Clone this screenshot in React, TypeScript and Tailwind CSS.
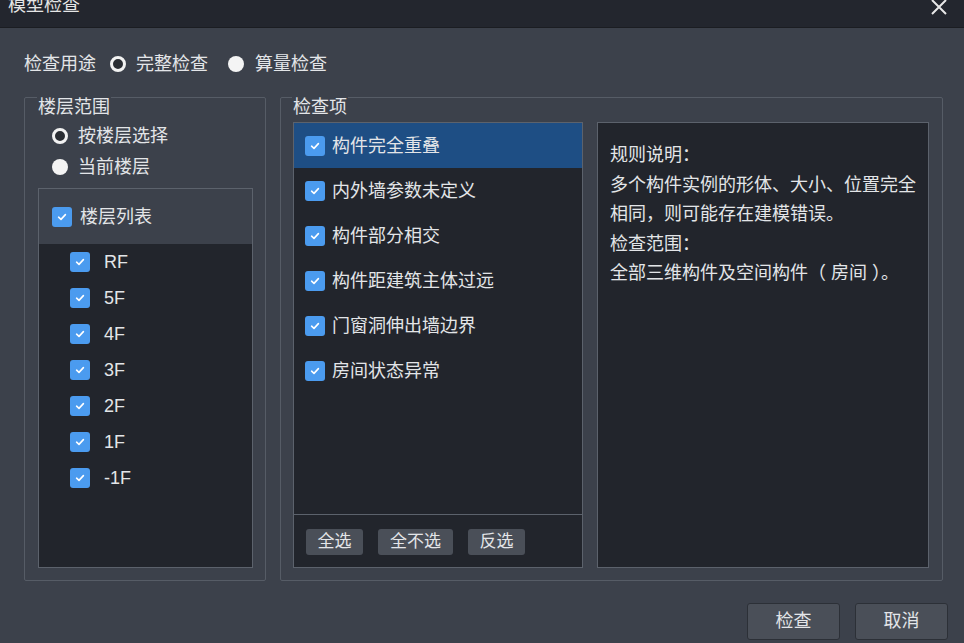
import React from "react";

const FONT = { fontFamily: '"Liberation Sans", "Noto Sans CJK SC", sans-serif' };

function Check({ className = "" }: { className?: string }) {
  return (
    <span className={`flex h-[20px] w-[20px] shrink-0 items-center justify-center rounded-[3px] bg-[#4b9bef] ${className}`}>
      <svg width="12" height="12" viewBox="0 0 12 12" fill="none">
        <path d="M2.6 6.2 L5 8.4 L9.4 3.6" stroke="white" strokeWidth="1.6" strokeLinecap="round" strokeLinejoin="round" />
      </svg>
    </span>
  );
}

function Radio({ checked, className = "" }: { checked: boolean; className?: string }) {
  return checked ? (
    <span className={`block h-[16px] w-[16px] shrink-0 rounded-full border-[3px] border-[#f2f2f2] bg-[#2a2d33] ${className}`} />
  ) : (
    <span className={`block h-[16px] w-[16px] shrink-0 rounded-full bg-[#f4f4f4] ${className}`} />
  );
}

const floors = ["RF", "5F", "4F", "3F", "2F", "1F", "-1F"];
const items = ["构件完全重叠", "内外墙参数未定义", "构件部分相交", "构件距建筑主体过远", "门窗洞伸出墙边界", "房间状态异常"];

export default function App() {
  return (
    <div className="flex h-[643px] w-[964px] flex-col overflow-hidden bg-[#3c414b] text-[18px] text-[#e3e5e8]" style={FONT}>
      {/* Title bar */}
      <div className="flex h-[28px] shrink-0 items-start justify-between border-b border-[#1b1d22] bg-[#23262e]">
        <span className="ml-[8px] mt-[-4px] leading-[18px] text-[#e6e6e6]">模型检查</span>
        <svg className="mr-[15px] mt-[-3px]" width="20" height="20" viewBox="0 0 20 20">
          <path d="M3 3 L17 17 M17 3 L3 17" stroke="#e8e8e8" strokeWidth="2" />
        </svg>
      </div>

      <div className="flex flex-col pl-[24px] pr-[21px]">
        {/* Purpose row */}
        <div className="flex h-[69px] items-center pt-[2px]">
          <span className="leading-[18px]">检查用途</span>
          <Radio checked className="ml-[14px]" />
          <span className="ml-[10px] leading-[18px]">完整检查</span>
          <Radio checked={false} className="ml-[20px]" />
          <span className="ml-[11px] leading-[18px]">算量检查</span>
        </div>

        {/* Groups */}
        <div className="flex h-[484px] gap-[14px]">
          {/* Floor range */}
          <div className="relative flex w-[242px] flex-col rounded-[2px] border border-[#565c66] pl-[13px] pr-[12px] pb-[12px] pt-[22px]">
            <span className="absolute left-[12px] top-[-3px] bg-[#3c414b] px-[1px] pt-[3px] leading-[18px]">楼层范围</span>
            <div className="flex h-[31px] items-center pl-[14px]">
              <Radio checked />
              <span className="ml-[10px] leading-[18px]">按楼层选择</span>
            </div>
            <div className="flex h-[31px] items-center pl-[14px]">
              <Radio checked={false} />
              <span className="ml-[10px] leading-[18px]">当前楼层</span>
            </div>
            <div className="mt-[6px] flex flex-1 flex-col border border-[#5c626c]">
              <div className="flex h-[55px] items-center pl-[13px]">
                <Check />
                <span className="ml-[8px] leading-[18px]">楼层列表</span>
              </div>
              <div className="flex flex-1 flex-col bg-[#22252c]">
                {floors.map((f) => (
                  <div key={f} className="flex h-[36px] items-center pl-[31px]">
                    <Check />
                    <span className="ml-[14px] leading-[18px]">{f}</span>
                  </div>
                ))}
              </div>
            </div>
          </div>

          {/* Check items */}
          <div className="relative flex flex-1 gap-[14px] rounded-[2px] border border-[#565c66] pl-[12px] pr-[13px] pb-[12px] pt-[24px]">
            <span className="absolute left-[11px] top-[-3px] bg-[#3c414b] px-[1px] pt-[3px] leading-[18px]">检查项</span>
            <div className="flex w-[290px] flex-col border border-[#5c626c] bg-[#22252c]">
              <div className="flex flex-1 flex-col">
                {items.map((it, i) => (
                  <div key={it} className={`flex h-[45px] items-center pl-[11px] ${i === 0 ? "bg-[#1e4e84]" : ""}`}>
                    <Check />
                    <span className="ml-[7px] leading-[18px]">{it}</span>
                  </div>
                ))}
              </div>
              <div className="flex h-[53px] gap-[15px] border-t border-[#5c626c] pl-[12px] pt-[14px] text-[17px]">
                <button className="h-[26px] w-[57px] rounded-[3px] bg-[#4a4f58] leading-[26px] text-[#e3e5e8]">全选</button>
                <button className="h-[26px] w-[75px] rounded-[3px] bg-[#4a4f58] leading-[26px] text-[#e3e5e8]">全不选</button>
                <button className="h-[26px] w-[57px] rounded-[3px] bg-[#4a4f58] leading-[26px] text-[#e3e5e8]">反选</button>
              </div>
            </div>
            <div className="flex flex-1 flex-col border border-[#5c626c] bg-[#22252c] pl-[12px] pt-[18px] leading-[29.5px]">
              <div>规则说明：</div>
              <div>多个构件实例的形体、大小、位置完全</div>
              <div>相同，则可能存在建模错误。</div>
              <div>检查范围：</div>
              <div>全部三维构件及空间构件（ 房间 ）。</div>
            </div>
          </div>
        </div>
      </div>

      {/* Footer */}
      <div className="mt-[22px] flex justify-end gap-[15px] pr-[16px]">
        <button className="h-[37px] w-[93px] rounded-[3px] border border-[#2c3037] bg-[#4a4f58] text-[18px] text-[#e3e5e8]">检查</button>
        <button className="h-[37px] w-[93px] rounded-[3px] border border-[#2c3037] bg-[#4a4f58] text-[18px] text-[#e3e5e8]">取消</button>
      </div>
    </div>
  );
}
